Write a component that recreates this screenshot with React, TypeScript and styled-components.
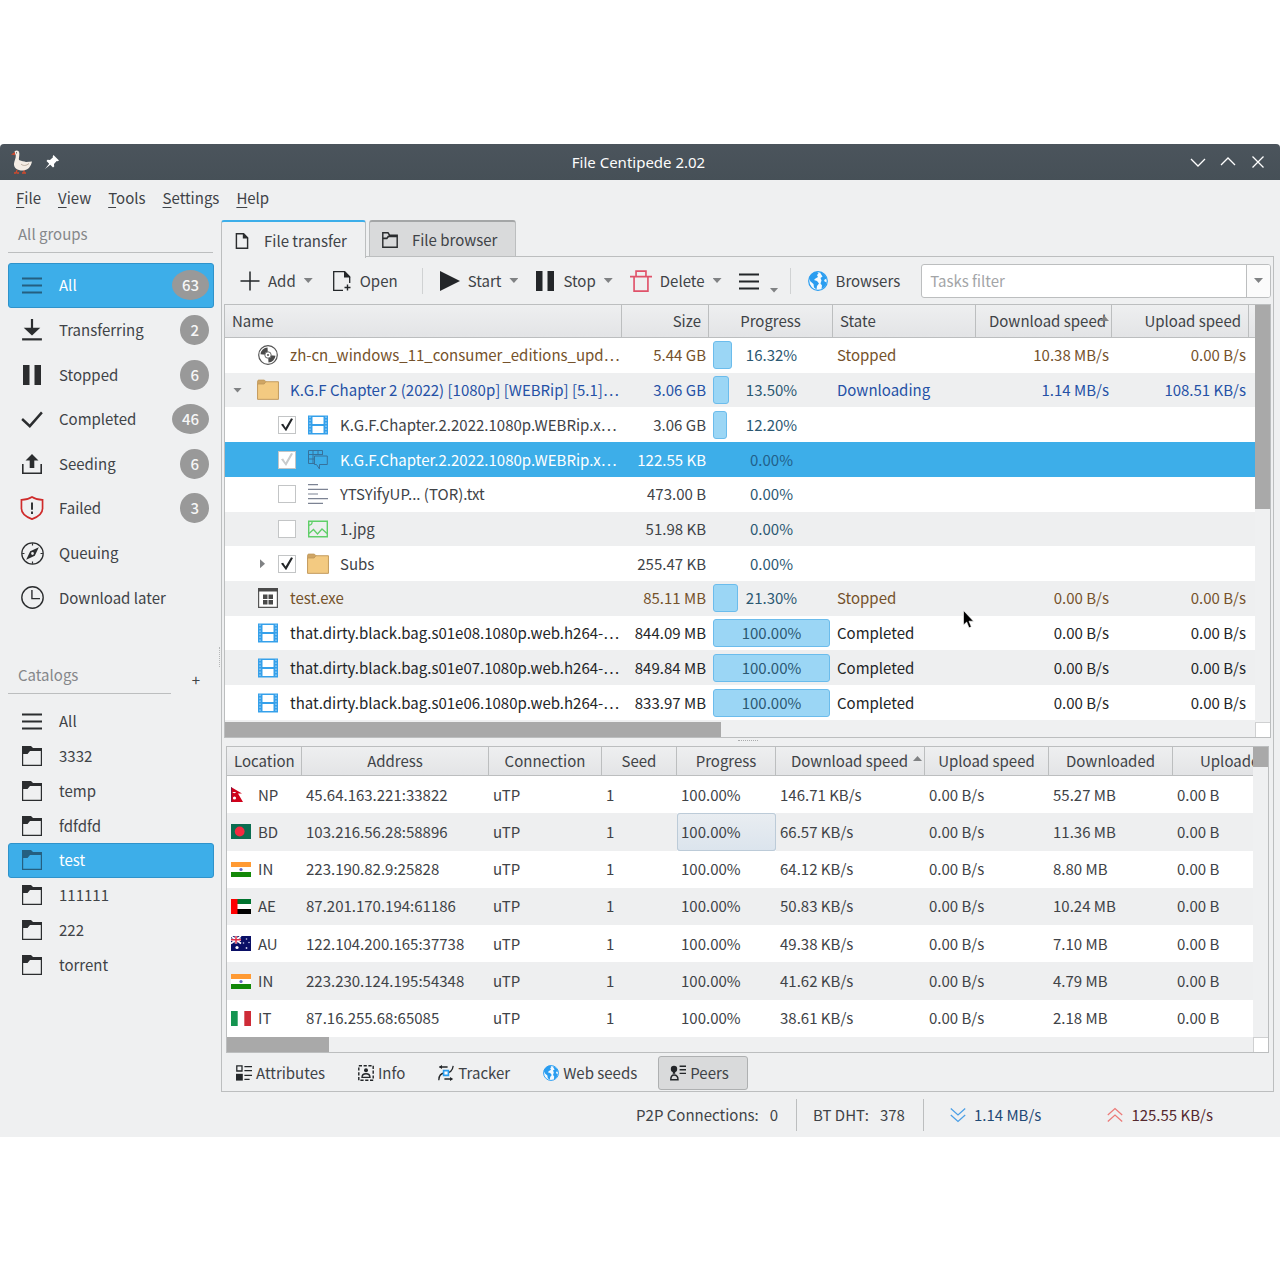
import React from "react";
import styled, { createGlobalStyle, css } from "styled-components";

const ink = "#404347";
const line = "#bcbebf";
const accent = "#3daee9";
const paper = "#eff0f1";

const GlobalStyle = createGlobalStyle`
  *, *::before, *::after { box-sizing: border-box; }
  body { margin: 0; background: #fff; }
  body, button, input, table {
    font-family: "Noto Sans CJK SC", "Noto Sans", sans-serif;
    font-size: 15px;
    line-height: 24px;
    color: ${ink};
  }
  button { border: 0; background: none; padding: 0; cursor: default; white-space: nowrap; }
  svg { display: block; flex: none; }
`;

/* ---------- icons ---------- */

const Svg = ({ size = 20, children }: { size?: number; children: React.ReactNode }) => (
  <svg width={size} height={size} viewBox="0 0 20 20" fill="none" aria-hidden="true">
    {children}
  </svg>
);

const Lines = () => (
  <Svg><path d="M0 3.500h20M0 10.500h20M0 17.500h20" stroke="currentColor" strokeWidth="2" /></Svg>
);
const Transfer = () => (
  <Svg size={22}><path d="M10 0v10" stroke="currentColor" strokeWidth="2" /><path d="M2.500 8h15L10 15z" fill="currentColor" /><path d="M1 18.500h18" stroke="currentColor" strokeWidth="2" /></Svg>
);
const Pause = () => (
  <Svg><path d="M1 0h6.500v20H1zM12.500 0H19v20h-6.500z" fill="currentColor" /></Svg>
);
const Check = () => (
  <Svg size={22}><path d="M1 10l7 6.500L19 4" stroke="currentColor" strokeWidth="2.200" /></Svg>
);
const Seed = () => (
  <Svg><path d="M.8 10v9.200h18.400V10" stroke="currentColor" strokeWidth="1.600" /><path d="M10 0l6.500 6.500H12.300V14H7.700V6.500H3.500z" fill="currentColor" /></Svg>
);
const Shield = () => (
  <Svg size={24}><path d="M10 .8c2.500 1.600 5.500 2.400 8.800 2.400v7.300c0 4-3.800 7-8.800 8.800-5-1.800-8.800-4.800-8.800-8.800V3.200C4.500 3.200 7.500 2.400 10 .8z" stroke="#cf2b2b" strokeWidth="1.400" /><path d="M10 5.500v6M10 13v2" stroke="currentColor" strokeWidth="1.600" /></Svg>
);
const Compass = () => (
  <Svg size={23}><circle cx="10" cy="10" r="9.300" stroke="currentColor" strokeWidth="1.100" /><path d="M10 1v2M10 17v2M1 10h2M17 10h2" stroke="currentColor" /><path fillRule="evenodd" d="M15.500 4.500L12 12l-7.500 3.500L8 8zM10 8.800a1.200 1.200 0 100 2.400 1.200 1.200 0 000-2.400z" fill="currentColor" /></Svg>
);
const Clock = () => (
  <Svg size={23}><circle cx="10" cy="10" r="9.300" stroke="currentColor" strokeWidth="1.200" /><path d="M9.500 3.500V11h7" stroke="currentColor" strokeWidth="1.200" /></Svg>
);
const Folder = () => (
  <Svg><path d="M.6 2v17.400h18.800V5" stroke="currentColor" strokeWidth="1.200" /><path d="M0 0h9l2 2h9v3H8L5.500 8H0z" fill="currentColor" /></Svg>
);
const FolderTab = () => (
  <Svg size={16}><path d="M1 19V1h6.500l2 3H19v15z" stroke="currentColor" strokeWidth="1.800" /><path d="M1 8h5l2-2.500h11" stroke="currentColor" strokeWidth="2" /></Svg>
);
const Page = () => (
  <Svg size={16}><path d="M3 1h9l5 5v13H3z" stroke="currentColor" strokeWidth="1.800" /><path d="M11 0l7 7h-7z" fill="currentColor" /></Svg>
);
const Plus = () => (
  <Svg><path d="M10 .5v19M.5 10h19" stroke="currentColor" strokeWidth="1.500" /></Svg>
);
const OpenPage = () => (
  <Svg><path d="M11 19.300H1.700V.7h11l5 5V12" stroke="currentColor" strokeWidth="1.300" /><path d="M12 0l6.500 6.500H12z" fill="currentColor" /><path d="M15.500 13.500v6M12.500 16.500h6" stroke="currentColor" strokeWidth="1.400" /></Svg>
);
const Play = () => <Svg><path d="M0 0l20 10L0 20z" fill="currentColor" /></Svg>;
const Trash = () => (
  <Svg size={22}><path d="M0 6h20M5.500 5.500V1h9v4.500M3.700 6v13.200h12.600V6" stroke="#e0526a" strokeWidth="1.500" /></Svg>
);
const Globe = ({ size = 20 }: { size?: number }) => (
  <Svg size={size}>
    <circle cx="10" cy="10" r="9.300" stroke="#2a9df0" strokeWidth="1.200" fill="#f4fafe" />
    <path d="M1 7.500C2 4 5 1 9 .7l1.500 1.800L9 4l1 2-2.500 1.500L6 9l3 1 2 2.500-2 2.500-.5 3.500L6 16.500 5.500 13 2.500 10.500z" fill="#2a9df0" />
    <path d="M12 1.500c3.500.5 6.300 3.500 7 7L17 8l-1 2 2.500 1.500c-.5 3-2.500 5.500-5 6.500l.5-3.500-1.500-2 1-3-1-2.500 2-1.500z" fill="#2a9df0" />
  </Svg>
);
const Disc = () => (
  <Svg>
    <circle cx="10" cy="10" r="9.300" stroke="#555" strokeWidth="1.200" />
    <path d="M10 10L2.500 9.200A7.500 7.500 0 019.500 2.500zM10 10l7.500.8a7.500 7.500 0 01-7 6.700z" fill="#4a4a4a" />
    <circle cx="10" cy="10" r="3.200" fill="#fff" stroke="#666" /><circle cx="10" cy="10" r="1" fill="#555" />
  </Svg>
);
const YellowFolder = () => (
  <Svg size={22}>
    <path d="M.5 2.500c0-1 .4-1.500 1.200-1.500h5l1.500 1.500V5H.5z" fill="#cfa564" stroke="#c29a5c" strokeWidth=".8" />
    <path d="M.5 4.500h6l1.500-2h11.500v16H.5z" fill="#f3ca81" stroke="#c29a5c" strokeWidth=".9" />
  </Svg>
);
const Film = () => (
  <Svg>
    <path d="M0 .5h20v19H0z" fill="#35a0ea" /><path d="M4.500 2h11v7h-11zM4.500 11h11v7h-11z" fill="#fff" />
    <path d="M2 1.500v17M18 1.500v17" stroke="#a5d6f7" strokeWidth="1.200" strokeDasharray="1.500 1.500" />
  </Svg>
);
const Subtitle = () => (
  <Svg>
    <path d="M6 13.500H.500V.500h14V5M.500 4.500h14M.500 9h5.500M5 .5v13M10 .5v4M6.500 6h12.800v8.500h-7.800V19L8.500 14.500h-2z" stroke="#37729c" strokeWidth="1" />
  </Svg>
);
const TextFile = () => (
  <Svg><path d="M0 .7h10M0 5.300h20M0 10h10M0 14.700h20M0 19.300h15" stroke="#7c8393" strokeWidth="1.200" /></Svg>
);
const Picture = () => (
  <Svg>
    <path d="M.7 2.200h18.600v15.600H.7z" stroke="#5fcf68" strokeWidth="1.400" />
    <path d="M1 14.500l4.500-4 4 4.500L14 10l5 4.500M1 6c2 .5 3.500-1.500 3-3.500" stroke="#5fcf68" strokeWidth="1.300" />
  </Svg>
);
const Exe = () => (
  <Svg>
    <path d="M.6.600h18.800v18.800H.6z" fill="#fff" stroke="#555" strokeWidth="1.200" /><path d="M0 0h20v3.500H0z" fill="#4a4a4a" />
    <path d="M5 6.500h4.500V11H5zM10.500 6.500H15V11h-4.500zM5 12h4.500v4.500H5zM10.500 12H15v4.500h-4.500z" fill="#4a4a4a" />
  </Svg>
);
const Attributes = () => (
  <Svg size={16}><path d="M1 1h6.500v6.500H1z" stroke="currentColor" strokeWidth="1.600" /><path d="M0 11h8.500v8.500H0z" fill="currentColor" /><path d="M10.500 2H20M10.500 7H20M10.500 13H20M10.500 18H17" stroke="currentColor" strokeWidth="1.700" /></Svg>
);
const Info = () => (
  <Svg size={16}><path d="M1 1h18v18H1z" stroke="currentColor" strokeWidth="1.800" strokeDasharray="4 2" /><circle cx="10" cy="6.500" r="2.500" fill="currentColor" /><path d="M5 15.500c0-3 2-4.500 5-4.500s5 1.500 5 4.500z" stroke="currentColor" strokeWidth="1.700" /></Svg>
);
const Tracker = () => (
  <Svg size={16}><path d="M2 2.500h10M1 19c0-8 4-9 8-9s9-1 10-9M8 17.500h9" stroke="currentColor" strokeWidth="1.600" /><path d="M5 0L1 2.500 5 5zM15 15l4 2.500-4 2.500z" fill="currentColor" /><path d="M7 7h6v6H7z" fill="#fff" stroke="#2a9df0" strokeWidth="2" /></Svg>
);
const Peers = () => (
  <Svg size={16}><circle cx="5" cy="5" r="4" fill="currentColor" /><path d="M3.500 7h3v4h-3z" fill="currentColor" /><path d="M1 18.500c0-4 1.500-6 4-6s5 2 5 6z" stroke="currentColor" strokeWidth="1.800" /><path d="M12 1.500h8M12 6h8M12 10.500h8" stroke="currentColor" strokeWidth="1.700" /></Svg>
);
const Down2 = () => <Svg size={16}><path d="M1 2l9 8 9-8M1 10l9 8 9-8" stroke="#4b9fe6" strokeWidth="1.600" /></Svg>;
const Up2 = () => <Svg size={16}><path d="M1 10l9-8 9 8M1 18l9-8 9 8" stroke="#ec7a78" strokeWidth="1.600" /></Svg>;

const Goose = () => (
  <svg width="22" height="26" viewBox="0 0 22 26" aria-hidden="true">
    <path d="M6 21l-1 3H3m3 0h2M13 21v3h-2m2 0h2" stroke="#d1492d" strokeWidth="1.300" fill="none" />
    <path d="M3.500 2.500C5 .8 8 1 8.300 4c.3 3-.8 5-.3 7 3 1 5 1.500 7 2l6-.5c-1 5-4 9-9.500 9-5 0-9-2.500-8.500-7 .3-3 2-5 1.800-8z" fill="#f3ece4" />
    <path d="M10 15c2 2 5 2 8-.5" stroke="#b8a99a" fill="none" /><path d="M4 3L0 5.500l4 .8z" fill="#d1492d" /><circle cx="5.500" cy="3.800" r=".6" fill="#333" />
  </svg>
);
const Pin = () => (
  <svg width="14" height="14" viewBox="0 0 14 14" aria-hidden="true">
    <path d="M8.500 0L14 5.500l-1.300.8-1-.3-2.700 3 .2 2.500-1.200 1L5.300 9.800 0 14l4.200-5.300L1.500 6l1-1.200L5 5l3-2.700-.3-1z" fill="#fff" />
  </svg>
);
const WindowGlyph = ({ d }: { d: string }) => (
  <svg width="16" height="16" viewBox="0 0 16 16" fill="none" aria-hidden="true"><path d={d} stroke="#fff" strokeWidth="1.300" /></svg>
);

const flags: Record<string, React.ReactNode> = {
  NP: <><path d="M0 0l11 6.500H7L12 15H0z" fill="#d0021b" /><path d="M.3 0v15" stroke="#203070" strokeWidth=".6" /><path d="M1.500 5c.5 1.500 3 1.500 3.500 0z" fill="#fff" /><circle cx="3.500" cy="11" r="1.600" fill="#fff" /></>,
  BD: <><path d="M0 0h20v15H0z" fill="#0b6e51" /><circle cx="8.700" cy="7.500" r="4.900" fill="#f42a41" /></>,
  IN: <><path d="M0 0h20v15H0z" fill="#fff" /><path d="M0 0h20v5H0z" fill="#ff9a33" /><path d="M0 10h20v5H0z" fill="#138808" /><circle cx="10" cy="7.500" r="1.600" fill="#6468bd" /></>,
  AE: <><path d="M0 0h20v15H0z" fill="#fff" /><path d="M0 0h20v5H0z" fill="#00732f" /><path d="M0 10h20v5H0z" fill="#000" /><path d="M0 0h6.500v15H0z" fill="#f00" /></>,
  AU: <><path d="M0 0h20v15H0z" fill="#0a0f66" /><path d="M0 0l10 7.500M10 0L0 7.500" stroke="#fff" strokeWidth="1.600" /><path d="M5 0v7.500M0 3.700h10" stroke="#fff" strokeWidth="2.600" /><path d="M5 0v7.500M0 3.700h10" stroke="#e0304a" strokeWidth="1.500" /><circle cx="6" cy="11.500" r="1.600" fill="#fff" /><circle cx="15.500" cy="3" r=".8" fill="#cfd2ee" /><circle cx="12.500" cy="7" r=".8" fill="#cfd2ee" /><circle cx="18" cy="6.500" r=".8" fill="#cfd2ee" /><circle cx="15.500" cy="12" r=".9" fill="#cfd2ee" /></>,
  IT: <><path d="M0 0h20v15H0z" fill="#fff" /><path d="M0 0h6.700v15H0z" fill="#149450" /><path d="M13.300 0H20v15h-6.700z" fill="#ce2b37" /></>,
};
const Flag = ({ code }: { code: string }) => (
  <svg width="20" height="15" viewBox="0 0 20 15" aria-hidden="true">{flags[code]}</svg>
);

const Caret = styled.span<{ $dir?: "up" | "down" | "right" }>`
  flex: none;
  width: ${(p) => (p.$dir === "right" ? 5 : 9)}px;
  height: ${(p) => (p.$dir === "right" ? 9 : 5)}px;
  background: #808284;
  clip-path: ${(p) =>
    p.$dir === "up" ? "polygon(50% 0, 100% 100%, 0 100%)" : p.$dir === "right" ? "polygon(0 0, 100% 50%, 0 100%)" : "polygon(0 0, 100% 0, 50% 100%)"};
`;

/* ---------- window frame ---------- */

const Desktop = styled.main`padding: 144px 0;`;
const Window = styled.div`
  background: ${paper};
  border-radius: 4px 4px 0 0;
  overflow: hidden;
`;
const TitleBar = styled.header`
  display: grid;
  grid-template-columns: 1fr auto 1fr;
  align-items: center;
  height: 36px;
  padding: 0 14px 0 11px;
  background: linear-gradient(#4b545c, #465057);
`;
const TitleIcons = styled.div`display: flex; align-items: center; gap: 12px;`;
const Title = styled.h1`
  margin: 0;
  font: 400 15px/24px "Noto Sans", sans-serif;
  color: #fcfcfc;
`;
const WindowButtons = styled.div`display: flex; justify-content: flex-end; gap: 14px;`;
const MenuBar = styled.nav`
  display: flex;
  align-items: center;
  gap: 17px;
  height: 36px;
  padding: 0 16px;
  & button::first-letter { text-decoration: underline; text-underline-offset: 3px; }
`;
const MenuItem = styled.button`display: block;`;
const Body = styled.div`display: grid; grid-template-columns: 221px minmax(0, 1fr); padding-right: 6px;`;

/* ---------- sidebar ---------- */

const Sidebar = styled.aside`position: relative; padding: 0 8px;`;
const Heading = styled.div<{ $second?: boolean }>`
  display: flex;
  align-items: center;
  justify-content: space-between;
  margin: ${(p) => (p.$second ? "37px 0 10px" : "0 0 10px")};
  & h2 {
    flex: 1;
    height: 37px;
    margin: 0;
    padding: 0 10px;
    border-bottom: 1px solid ${line};
    font-size: 15px;
    font-weight: 400;
    line-height: 36px;
    color: #85878a;
  }
`;
const AddCatalog = styled.button`width: 34px; padding-top: 8px; margin-left: 8px;`;
const NavList = styled.ul<{ $height: number }>`
  display: grid;
  grid-auto-rows: 1fr;
  height: ${(p) => p.$height}px;
  margin: 0;
  padding: 0;
  list-style: none;
`;
const NavItem = styled.button<{ $active?: boolean }>`
  display: flex;
  align-items: center;
  width: 206px;
  height: 100%;
  padding: 0 4px 0 11px;
  border: 1px solid transparent;
  border-radius: 3px;
  text-align: left;
  & > span:nth-child(2) { flex: 1; padding: 0 0 0 15px; }
  ${(p) => p.$active && css`
    background: ${accent};
    border-color: #2f93cb;
    color: #fff;
  `}
`;
const NavIcon = styled.span<{ $active?: boolean }>`
  display: flex;
  justify-content: center;
  width: 24px;
  color: ${(p) => (p.$active ? "#255f80" : "#2b2d2f")};
`;
const Badge = styled.span`
  padding: 0 10px;
  border-radius: 50%;
  background: #999;
  color: #f6f6f6;
  font-weight: 500;
  line-height: 30px;
`;
const Grip = styled.div<{ $vertical?: boolean }>`
  ${(p) => p.$vertical
    ? css`position: absolute; right: 1px; top: 431px; width: 1px; height: 20px; border-left: 1px dotted #b5b7b8;`
    : css`height: 8px; padding-top: 2px; &::after { content: ""; display: block; width: 20px; margin: 0 auto; border-top: 1px dotted #aaacad; }`}
`;

/* ---------- main panel ---------- */

const Tabs = styled.div`display: flex; gap: 3px; padding-top: 4px; height: 40px;`;
const Tab = styled.button<{ $active?: boolean }>`
  display: flex;
  align-items: center;
  gap: 14px;
  height: ${(p) => (p.$active ? 38 : 36)}px;
  padding: 2px 18px 0 12px;
  border: 1px solid ${line};
  border-top: 2px solid ${(p) => (p.$active ? accent : "#a4a6a7")};
  border-bottom: 0;
  border-radius: 3px 3px 0 0;
  background: ${(p) => (p.$active ? paper : "#d9dadb")};
  z-index: ${(p) => (p.$active ? 1 : 0)};
  & svg { color: #2b2d2f; }
`;
const Panel = styled.section`border: 1px solid ${line}; padding: 0 2px;`;
const Toolbar = styled.div`display: flex; align-items: center; height: 47px; padding: 0 0 0 16px;`;
const ToolGroup = styled.div<{ $gap: number }>`display: flex; align-items: center; gap: ${(p) => p.$gap}px;`;
const ToolButton = styled.button<{ $menu?: boolean }>`
  display: flex;
  align-items: center;
  gap: ${(p) => (p.$menu ? 11 : 8)}px;
  height: 34px;
  & svg { color: #232629; }
  & > ${Caret} { align-self: ${(p) => (p.$menu ? "flex-end" : "center")}; margin-bottom: ${(p) => (p.$menu ? 5 : 0)}px; }
`;
const Divider = styled.span<{ $gap: number }>`
  width: 1px;
  height: 26px;
  margin: 0 17px 0 ${(p) => p.$gap}px;
  background: #d0d2d3;
`;
const Filter = styled.div`
  display: flex;
  flex: 1;
  min-width: 0;
  height: 34px;
  margin-left: 21px;
  border: 1px solid ${line};
  border-radius: 3px;
  background: #fff;
  & input { flex: 1; min-width: 0; padding: 0 8px; border: 0; background: none; outline: 0; }
  & input::placeholder { color: #a3a5a7; opacity: 1; }
  & button { display: grid; flex: none; place-items: center; width: 24px; border-left: 1px solid ${line}; border-radius: 0 2px 2px 0; background: #fbfbfb; }
`;

const Frame = styled.div<{ $inset?: boolean }>`
  position: relative;
  display: grid;
  grid-template-columns: minmax(0, 1fr) 15px;
  margin: 0 ${(p) => (p.$inset ? 2 : 0)}px;
  border: 1px solid ${line};
`;
const VScroll = styled.div<{ $thumb: number }>`
  &::before { content: ""; display: block; height: ${(p) => p.$thumb}px; background: #a9a9a9; }
`;
const HScroll = styled.div<{ $thumb: string; $top?: number }>`
  height: ${(p) => 15 + (p.$top || 0)}px;
  padding-top: ${(p) => p.$top || 0}px;
  &::before { content: ""; display: block; height: 15px; width: ${(p) => p.$thumb}; background: #a9a9a9; }
`;
const Corner = styled.div`align-self: end; height: 15px; border: 1px solid #cfd0d1; border-width: 1px 0 0 1px; background: #fff;`;

const Table = styled.table<{ $height: number }>`
  width: 100%;
  height: ${(p) => p.$height}px;
  table-layout: fixed;
  border-collapse: separate;
  border-spacing: 0;
  background: #fff;
  white-space: nowrap;
  & td { padding: 0 3px 0 4px; overflow: hidden; }
`;
const Th = styled.th<{ $w?: number; $align?: string; $tall?: boolean; $last?: boolean; $filler?: boolean }>`
  width: ${(p) => (p.$w ? `${p.$w}px` : "auto")};
  height: ${(p) => (p.$tall ? 33 : 29)}px;
  padding: 0 ${(p) => (p.$last || p.$filler ? 0 : 7)}px 0 ${(p) => (p.$filler ? 0 : p.$last ? 27 : 7)}px;
  overflow: hidden;
  border-right: ${(p) => (p.$last || p.$filler ? 0 : 1)}px solid ${line};
  border-bottom: 1px solid ${line};
  background: linear-gradient(#eeeff0, #e3e4e6);
  font-weight: 400;
  text-align: ${(p) => p.$align || "center"};
`;
const SortHead = styled.div<{ $overlap?: boolean }>`
  display: flex;
  justify-content: flex-end;
  gap: ${(p) => (p.$overlap ? 0 : 5)}px;
  margin-right: -5px;
  & > ${Caret} { margin: 7px 0 0 ${(p) => (p.$overlap ? -6 : 0)}px; }
`;
const tones = { stopped: "#75522b", active: "#2551a6", done: "#232527", plain: ink, selected: "#fff" };
type Tone = keyof typeof tones;
const Row = styled.tr<{ $tone: Tone }>`
  color: ${(p) => tones[p.$tone]};
  background: ${(p) => (p.$tone === "selected" ? accent : "#fff")};
  &:nth-child(even) { background: ${(p) => (p.$tone === "selected" ? accent : "#eeeff0")}; }
`;
const Num = styled.td`text-align: right;`;
const NameCell = styled.div<{ $level: number }>`
  display: flex;
  align-items: center;
  margin-left: ${(p) => p.$level * 25 - 4}px;
`;
const IconSlot = styled.span<{ $level: number }>`
  display: flex;
  justify-content: center;
  flex: none;
  width: 20px;
  margin: 0 12px 0 ${(p) => (p.$level ? 12 : 8)}px;
`;
const Toggler = styled.button`display: flex; justify-content: center; flex: none; width: 25px;`;
const Tick = styled.input`
  appearance: none;
  display: grid;
  place-items: center;
  flex: none;
  width: 18px;
  height: 18px;
  margin: 0 0 0 3px;
  border: 1px solid #c3c5c6;
  background: #fff;
  &:checked::before {
    content: "";
    width: 12px;
    height: 13px;
    background: #232629;
    clip-path: polygon(0 48%, 18% 42%, 38% 72%, 84% 0, 100% 6%, 42% 100%);
  }
  &:disabled::before { background: #c9cbcc; }
`;
const Meter = styled.div`
  display: grid;
  align-items: center;
  min-height: 28px;
  & > * { grid-area: 1 / 1; }
`;
const Fill = styled.div`
  height: 28px;
  border: 1px solid #6bbcec;
  border-radius: 3px;
  background: #9bd6f5;
`;
const MeterText = styled.span<{ $selected?: boolean }>`
  text-align: center;
  color: ${(p) => (p.$selected ? "#22608a" : "#2b5872")};
`;
const Cursor = styled.svg`position: absolute; left: 738px; top: 305px;`;
const Place = styled.div`display: flex; align-items: center; gap: 7px;`;
const PeerRow = styled.tr`
  &:nth-child(even) { background: #eeeff0; }
`;
const ProgressCell = styled.td<{ $focus?: boolean }>`
  ${(p) => p.$focus && css`
    border-radius: 3px;
    background: linear-gradient(#e9edf1, #dbe4ed);
    box-shadow: inset 0 0 0 1px #bccbd8;
  `}
`;
const BottomTabs = styled.div`display: flex; padding: 3px 0 1px;`;
const BottomTab = styled.button<{ $active?: boolean }>`
  display: flex;
  align-items: center;
  gap: 4px;
  height: 34px;
  margin-right: 2px;
  padding: 0 18px 0 11px;
  border: 1px solid ${(p) => (p.$active ? "#aeb0b1" : "transparent")};
  border-radius: 3px;
  background: ${(p) => (p.$active ? "#d9dadb" : "none")};
  & svg { color: #232629; }
`;
const StatusBar = styled.footer`
  display: flex;
  align-items: center;
  justify-content: flex-end;
  height: 45px;
  padding-right: 67px;
`;
const Stat = styled.div`
  display: flex;
  gap: 11px;
  margin-right: 16px;
  padding-right: 18px;
  border-right: 1px solid ${line};
  line-height: 32px;
`;
const Speed = styled.div<{ $color: string; $gap: number }>`
  display: flex;
  align-items: center;
  gap: 8px;
  margin-left: ${(p) => p.$gap}px;
  color: ${(p) => p.$color};
`;

/* ---------- data ---------- */

const groups: [string, React.ReactNode, number?][] = [
  ["All", <Lines />, 63], ["Transferring", <Transfer />, 2], ["Stopped", <Pause />, 6], ["Completed", <Check />, 46],
  ["Seeding", <Seed />, 6], ["Failed", <Shield />, 3], ["Queuing", <Compass />], ["Download later", <Clock />],
];
const catalogs = ["All", "3332", "temp", "fdfdfd", "test", "111111", "222", "torrent"];

type Task = {
  name: string; icon: React.ReactNode; size: string; pct: number; tone: Tone; level?: number;
  state?: string; down?: string; up?: string; open?: boolean; checked?: boolean;
};
const zero = "0.00 B/s";
const tasks: Task[] = [
  { name: "zh-cn_windows_11_consumer_editions_upd⋯", icon: <Disc />, size: "5.44 GB", pct: 16.32, tone: "stopped", state: "Stopped", down: "10.38 MB/s", up: zero },
  { name: "K.G.F Chapter 2 (2022) [1080p] [WEBRip] [5.1]⋯", icon: <YellowFolder />, size: "3.06 GB", pct: 13.5, tone: "active", state: "Downloading", down: "1.14 MB/s", up: "108.51 KB/s", open: true },
  { name: "K.G.F.Chapter.2.2022.1080p.WEBRip.x⋯", icon: <Film />, size: "3.06 GB", pct: 12.2, tone: "plain", level: 1, checked: true },
  { name: "K.G.F.Chapter.2.2022.1080p.WEBRip.x⋯", icon: <Subtitle />, size: "122.55 KB", pct: 0, tone: "selected", level: 1, checked: true },
  { name: "YTSYifyUP... (TOR).txt", icon: <TextFile />, size: "473.00 B", pct: 0, tone: "plain", level: 1, checked: false },
  { name: "1.jpg", icon: <Picture />, size: "51.98 KB", pct: 0, tone: "plain", level: 1, checked: false },
  { name: "Subs", icon: <YellowFolder />, size: "255.47 KB", pct: 0, tone: "plain", level: 1, checked: true, open: false },
  { name: "test.exe", icon: <Exe />, size: "85.11 MB", pct: 21.3, tone: "stopped", state: "Stopped", down: zero, up: zero },
  { name: "that.dirty.black.bag.s01e08.1080p.web.h264-⋯", icon: <Film />, size: "844.09 MB", pct: 100, tone: "done", state: "Completed", down: zero, up: zero },
  { name: "that.dirty.black.bag.s01e07.1080p.web.h264-⋯", icon: <Film />, size: "849.84 MB", pct: 100, tone: "done", state: "Completed", down: zero, up: zero },
  { name: "that.dirty.black.bag.s01e06.1080p.web.h264-⋯", icon: <Film />, size: "833.97 MB", pct: 100, tone: "done", state: "Completed", down: zero, up: zero },
];
const peers = [
  ["NP", "45.64.163.221:33822", "146.71 KB/s", "55.27 MB"],
  ["BD", "103.216.56.28:58896", "66.57 KB/s", "11.36 MB"],
  ["IN", "223.190.82.9:25828", "64.12 KB/s", "8.80 MB"],
  ["AE", "87.201.170.194:61186", "50.83 KB/s", "10.24 MB"],
  ["AU", "122.104.200.165:37738", "49.38 KB/s", "7.10 MB"],
  ["IN", "223.230.124.195:54348", "41.62 KB/s", "4.79 MB"],
  ["IT", "87.16.255.68:65085", "38.61 KB/s", "2.18 MB"],
];

const TaskRow = ({ t }: { t: Task }) => {
  const level = t.level || 0;
  return (
    <Row $tone={t.tone}>
      <td>
        <NameCell $level={level}>
          {t.open !== undefined
            ? <Toggler aria-label={`Toggle ${t.name}`}><Caret $dir={t.open ? "down" : "right"} /></Toggler>
            : <Toggler as="span" />}
          {level > 0 && <Tick type="checkbox" aria-label={t.name} defaultChecked={t.checked} disabled={t.tone === "selected"} />}
          <IconSlot $level={level}>{t.icon}</IconSlot>
          <span>{t.name}</span>
        </NameCell>
      </td>
      <Num>{t.size}</Num>
      <td>
        <Meter>
          {t.pct > 0 && <Fill style={{ width: `${t.pct}%` }} />}
          <MeterText $selected={t.tone === "selected"}>{t.pct.toFixed(2)}%</MeterText>
        </Meter>
      </td>
      <td>{t.state}</td>
      <Num>{t.down}</Num>
      <Num>{t.up}</Num>
      <td />
    </Row>
  );
};

export default function App() {
  return (
    <Desktop>
      <GlobalStyle />
      <Window>
        <TitleBar>
          <TitleIcons><Goose /><Pin /></TitleIcons>
          <Title>File Centipede 2.02</Title>
          <WindowButtons>
            <button aria-label="Minimize"><WindowGlyph d="M1 5l7 7 7-7" /></button>
            <button aria-label="Maximize"><WindowGlyph d="M1 11l7-7 7 7" /></button>
            <button aria-label="Close"><WindowGlyph d="M2.500 2.500l11 11M13.500 2.500l-11 11" /></button>
          </WindowButtons>
        </TitleBar>
        <MenuBar>
          {["File", "View", "Tools", "Settings", "Help"].map((m) => <MenuItem key={m}>{m}</MenuItem>)}
        </MenuBar>
        <Body>
          <Sidebar>
            <Heading><h2>All groups</h2></Heading>
            <NavList $height={357}>
              {groups.map(([label, icon, count], i) => (
                <li key={label}>
                  <NavItem $active={i === 0}>
                    <NavIcon $active={i === 0}>{icon}</NavIcon>
                    <span>{label}</span>
                    {count !== undefined && <Badge>{count}</Badge>}
                  </NavItem>
                </li>
              ))}
            </NavList>
            <Heading $second><h2>Catalogs</h2><AddCatalog aria-label="Add catalog">+</AddCatalog></Heading>
            <NavList $height={278}>
              {catalogs.map((label, i) => (
                <li key={label}>
                  <NavItem $active={i === 4}>
                    <NavIcon $active={i === 4}>{i === 0 ? <Lines /> : <Folder />}</NavIcon>
                    <span>{label}</span>
                  </NavItem>
                </li>
              ))}
            </NavList>
            <Grip $vertical />
          </Sidebar>
          <div>
            <Tabs>
              <Tab $active><Page />File transfer</Tab>
              <Tab><FolderTab />File browser</Tab>
            </Tabs>
            <Panel>
              <Toolbar>
                <ToolGroup $gap={19}>
                  <ToolButton><Plus />Add<Caret /></ToolButton>
                  <ToolButton><OpenPage />Open</ToolButton>
                </ToolGroup>
                <Divider $gap={24} />
                <ToolGroup $gap={17}>
                  <ToolButton><Play />Start<Caret /></ToolButton>
                  <ToolButton><Pause />Stop<Caret /></ToolButton>
                  <ToolButton><Trash />Delete<Caret /></ToolButton>
                  <ToolButton $menu aria-label="More"><Lines /><Caret /></ToolButton>
                </ToolGroup>
                <Divider $gap={11} />
                <ToolButton><Globe />Browsers</ToolButton>
                <Filter>
                  <input aria-label="Tasks filter" placeholder="Tasks filter" />
                  <button aria-label="Filter history"><Caret /></button>
                </Filter>
              </Toolbar>
              <Frame>
                <Table $height={415}>
                  <thead>
                    <tr>
                      <Th $tall $align="left">Name</Th>
                      <Th $tall $w={87} $align="right">Size</Th>
                      <Th $tall $w={124}>Progress</Th>
                      <Th $tall $w={143} $align="left">State</Th>
                      <Th $tall $w={136}><SortHead $overlap>Download speed<Caret $dir="up" /></SortHead></Th>
                      <Th $tall $w={137} $align="right">Upload speed</Th>
                      <Th $tall $w={6} $filler />
                    </tr>
                  </thead>
                  <tbody>{tasks.map((t, i) => <TaskRow key={i} t={t} />)}</tbody>
                </Table>
                <VScroll $thumb={204} />
                <HScroll $thumb="496px" $top={2} />
                <Corner />
                <Cursor width="12" height="19" viewBox="0 0 12 19" aria-hidden="true">
                  <path d="M.5.500v14.500l3.200-3 2.300 5.800 2.300-1L6 11.200h4.500z" fill="#000" stroke="#fff" strokeWidth=".6" />
                </Cursor>
              </Frame>
              <Grip />
              <Frame $inset>
                <Table $height={290}>
                  <thead>
                    <tr>
                      <Th $w={75}>Location</Th>
                      <Th $w={187}>Address</Th>
                      <Th $w={113}>Connection</Th>
                      <Th $w={75}>Seed</Th>
                      <Th $w={99}>Progress</Th>
                      <Th $w={149}><SortHead>Download speed<Caret $dir="up" /></SortHead></Th>
                      <Th $w={124}>Upload speed</Th>
                      <Th $w={124}>Downloaded</Th>
                      <Th $last $align="left">Uploaded</Th>
                    </tr>
                  </thead>
                  <tbody>
                    {peers.map(([code, address, down, total], i) => (
                      <PeerRow key={address}>
                        <td><Place><Flag code={code} />{code}</Place></td>
                        <td>{address}</td>
                        <td>uTP</td>
                        <td>1</td>
                        <ProgressCell $focus={i === 1}>100.00%</ProgressCell>
                        <td>{down}</td>
                        <td>0.00 B/s</td>
                        <td>{total}</td>
                        <td>0.00 B</td>
                      </PeerRow>
                    ))}
                  </tbody>
                </Table>
                <VScroll $thumb={20} />
                <HScroll $thumb="102px" />
                <Corner />
              </Frame>
              <BottomTabs>
                <BottomTab><Attributes />Attributes</BottomTab>
                <BottomTab><Info />Info</BottomTab>
                <BottomTab><Tracker />Tracker</BottomTab>
                <BottomTab><Globe size={16} />Web seeds</BottomTab>
                <BottomTab $active><Peers />Peers</BottomTab>
              </BottomTabs>
            </Panel>
          </div>
        </Body>
        <StatusBar>
          <Stat><span>P2P Connections:</span><span>0</span></Stat>
          <Stat><span>BT DHT:</span><span>378</span></Stat>
          <Speed $color="#1f4a76" $gap={10}><Down2 />1.14 MB/s</Speed>
          <Speed $color="#55292f" $gap={66}><Up2 />125.55 KB/s</Speed>
        </StatusBar>
      </Window>
    </Desktop>
  );
}
